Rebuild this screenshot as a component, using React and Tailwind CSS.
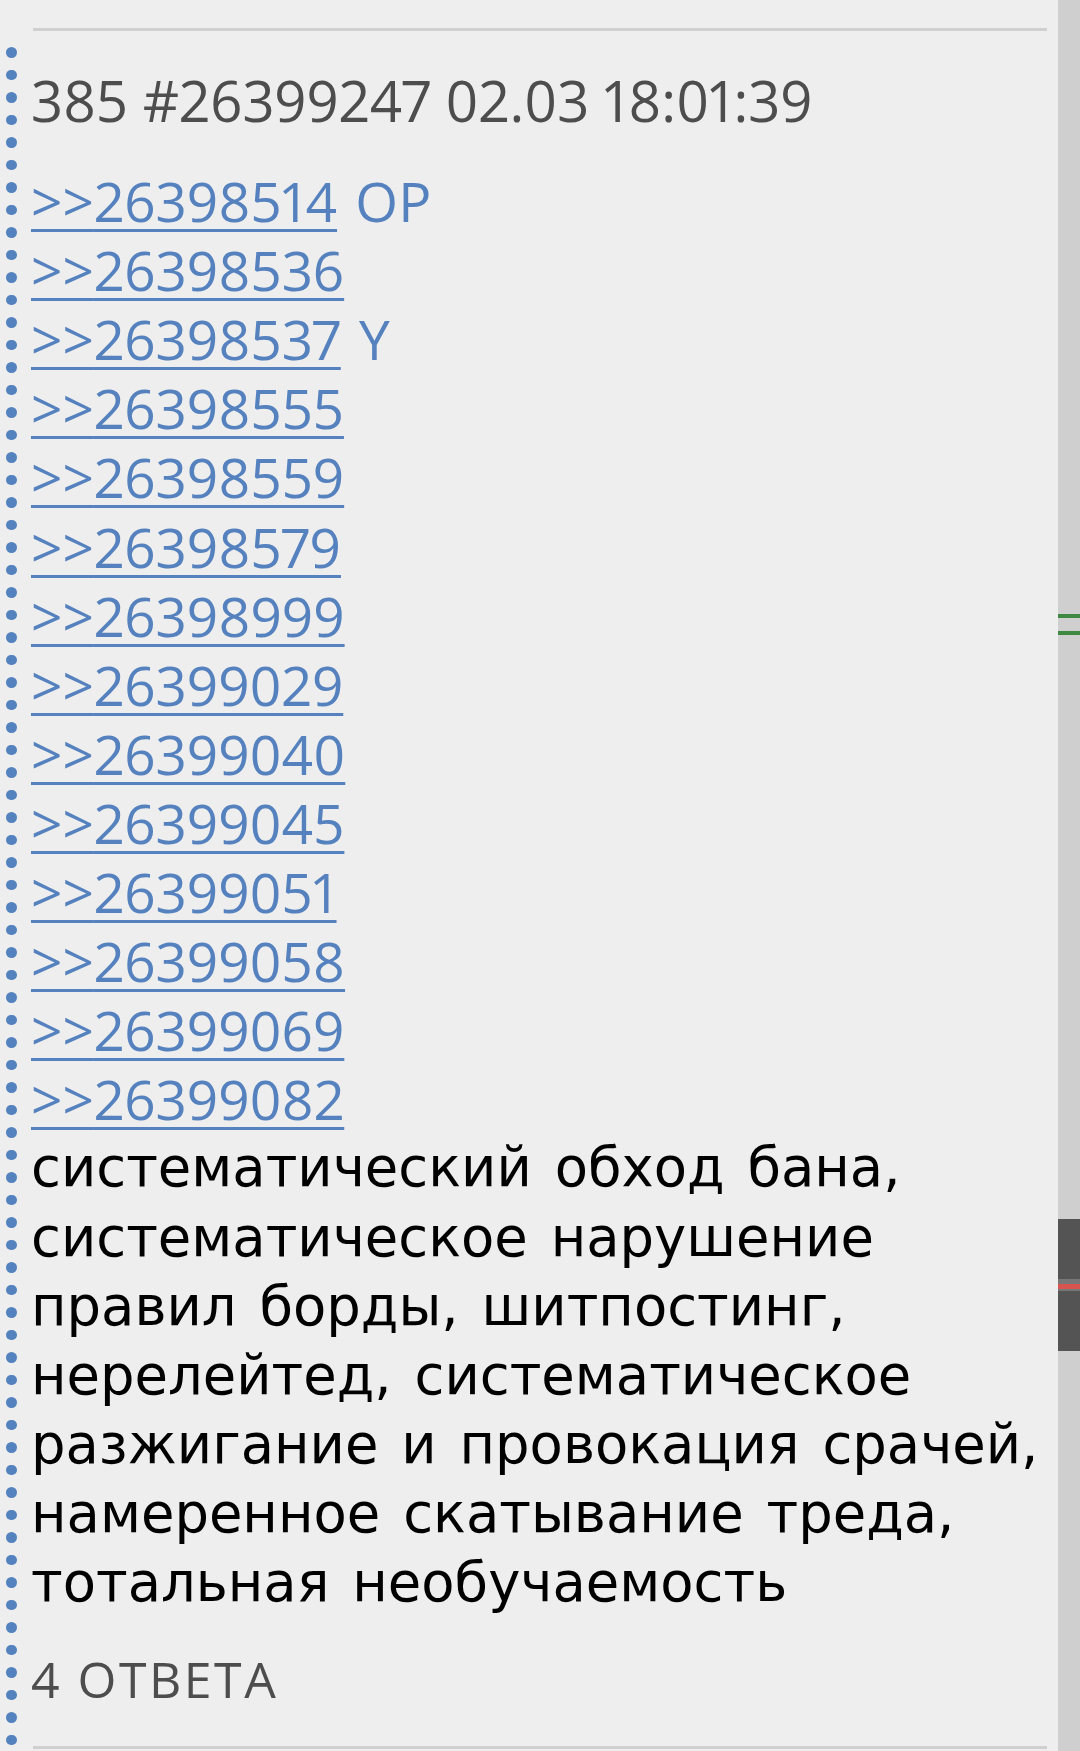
import React from "react";

const replies = [
  { id: "26398514", tag: "OP" },
  { id: "26398536" },
  { id: "26398537", tag: "Y" },
  { id: "26398555" },
  { id: "26398559" },
  { id: "26398579" },
  { id: "26398999" },
  { id: "26399029" },
  { id: "26399040" },
  { id: "26399045" },
  { id: "26399051" },
  { id: "26399058" },
  { id: "26399069" },
  { id: "26399082" },
];

const bodyLines = [
  "систематический обход бана,",
  "систематическое нарушение",
  "правил борды, шитпостинг,",
  "нерелейтед, систематическое",
  "разжигание и провокация срачей,",
  "намеренное скатывание треда,",
  "тотальная необучаемость",
];

const dots = Array.from({ length: 76 }, (_, i) => i);

export default function App() {
  return (
    <div className="flex w-[1080px] h-[1751px] bg-[#eeeeee] overflow-hidden">
      <div className="flex-1 flex flex-col pt-[28px]">
        <div className="ml-[33px] mr-[11px] h-[3px] bg-[#d0d0d0]" />

        <div className="flex flex-1 min-h-0">
          {/* dotted thread marker */}
          <div className="w-[31px] shrink-0 flex flex-col gap-[12px] pt-[16px] pl-[6px] overflow-hidden">
            {dots.map((i) => (
              <div key={i} className="w-[10.5px] h-[10.5px] shrink-0 rounded-full bg-[#5482bf]" />
            ))}
          </div>

          <div className="flex-1 flex flex-col pt-[35px]">
            <div className="font-['Open_Sans',sans-serif] text-[56.4px] leading-[69.1px] text-[#4d4d4d] whitespace-nowrap proportional-nums">
              385 #26399247 02.03 18:01:39
            </div>

            <div className="mt-[31px] font-['Open_Sans',sans-serif] text-[55px] leading-[69.1px] text-[#5582be] proportional-nums">
              {replies.map((r) => (
                <div key={r.id} className="whitespace-nowrap">
                  <a className="underline decoration-[3px] underline-offset-[7px]">
                    &gt;&gt;{r.id}
                  </a>
                  {r.tag && <span className="ml-[4px]"> {r.tag}</span>}
                </div>
              ))}
            </div>

            <p className="font-['DejaVu_Sans',sans-serif] text-[54.4px] leading-[69.1px] text-black [word-spacing:5.6px]">
              {bodyLines.map((line, i) => (
                <React.Fragment key={i}>
                  {line}
                  {i < bodyLines.length - 1 && <br />}
                </React.Fragment>
              ))}
            </p>

            <div className="mt-[32px] font-['Open_Sans',sans-serif] text-[50px] leading-[1.2] text-[#4d4d4d] tracking-[2.5px]">
              4 ОТВЕТА
            </div>
          </div>
        </div>

        <div className="ml-[33px] mr-[11px] h-[3px] bg-[#d0d0d0]" />
        <div className="h-[2px]" />
      </div>

      {/* scrollbar with markers */}
      <div className="relative w-[22px] shrink-0 bg-[#cfcfcf]">
        <div className="absolute left-0 right-0 top-[614px] h-[4px] bg-[#3f8a42]" />
        <div className="absolute left-0 right-0 top-[631px] h-[4px] bg-[#3f8a42]" />
        <div className="absolute left-0 right-0 top-[1219px] h-[132px] bg-[#545454]" />
        <div className="absolute left-0 right-0 top-[1279px] h-[12px] bg-[#777777]" />
        <div className="absolute left-0 right-0 top-[1284px] h-[5px] bg-[#d9534f]" />
      </div>
    </div>
  );
}
